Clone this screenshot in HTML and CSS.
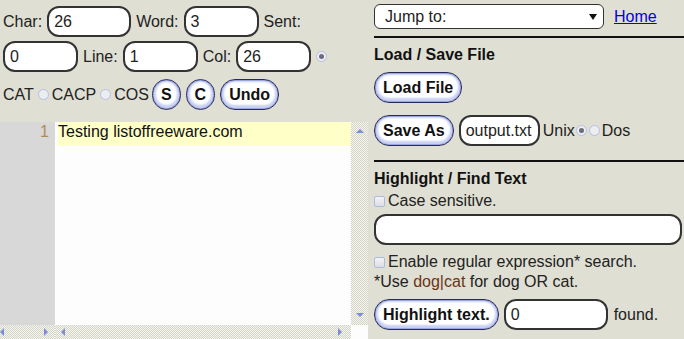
FILE: index.html
```html
<!DOCTYPE html>
<html lang="en">
<head>
    <meta charset="UTF-8">
    <meta name="viewport" content="width=device-width, initial-scale=1.0">
    <title>Text Editor</title>
    <link rel="stylesheet" href="styles.css">
</head>
<body>
    <div class="page">
        <div class="left">
            <div class="stats">
                <div class="row">
                    <span>Char:</span>
                    <input class="field w84" type="text" value="26">
                    <span>Word:</span>
                    <input class="field" type="text" value="3">
                    <span>Sent:</span>
                </div>
                <div class="row">
                    <input class="field" type="text" value="0">
                    <span>Line:</span>
                    <input class="field" type="text" value="1">
                    <span>Col:</span>
                    <input class="field" type="text" value="26">
                    <span class="radio on"></span>
                </div>
                <div class="row modes">
                    <span>CAT</span>
                    <span class="radio gap"></span>
                    <span>CACP</span>
                    <span class="radio gap"></span>
                    <span>COS</span>
                    <button class="btn first">S</button>
                    <button class="btn">C</button>
                    <button class="btn">Undo</button>
                </div>
            </div>
            <div class="editor">
                <div class="editor-main">
                    <div class="gutter"><div class="ln">1</div></div>
                    <div class="code"><div class="line active">Testing listoffreeware.com</div></div>
                    <div class="vscroll checker">
                        <span class="arrow up"></span>
                        <span class="arrow down"></span>
                    </div>
                </div>
                <div class="hscroll">
                    <div class="hs-gutter checker">
                        <span class="arrow back"></span>
                        <span class="arrow fwd"></span>
                    </div>
                    <div class="hs-code checker">
                        <span class="arrow back"></span>
                        <span class="arrow fwd"></span>
                    </div>
                    <div class="corner"></div>
                </div>
            </div>
        </div>

        <div class="side">
            <div class="jump-row">
                <div class="jump">
                    <select><option>Jump to:</option></select>
                </div>
                <a href="#">Home</a>
            </div>
            <div class="rule"></div>

            <div class="heading">Load / Save File</div>
            <div class="load-row"><button class="btn">Load File</button></div>
            <div class="save-row">
                <button class="btn">Save As</button>
                <input class="field w81" type="text" value="output.txt">
                <span class="unix">Unix</span>
                <span class="radio on"></span>
                <span class="radio dos"></span>
                <span>Dos</span>
            </div>
            <div class="rule second"></div>

            <div class="heading">Highlight / Find Text</div>
            <div class="check-line"><span class="check"></span>Case sensitive.</div>
            <input class="field search" type="text" value="">
            <div class="check-line regex"><span class="check"></span>Enable regular expression* search.</div>
            <div class="hint">*Use <span class="code-word">dog|cat</span> for dog OR cat.</div>
            <div class="find-row">
                <button class="btn">Highlight text.</button>
                <input class="field w104" type="text" value="0">
                <span>found.</span>
            </div>
        </div>
    </div>
</body>
</html>
```

FILE: styles.css
```css
body {
    margin: 0;
    background: #dfdfd3;
    font-family: "Liberation Sans", Arial, sans-serif;
    font-size: 16px;
    color: #222;
}
.page {
    display: flex;
    height: 339px;
    overflow: hidden;
}

/* left side */
.left {
    width: 368px;
    flex: none;
    display: flex;
    flex-direction: column;
}
.stats {
    padding: 6px 0 0 3px;
}
.row {
    display: flex;
    align-items: center;
    gap: 5px;
    height: 31px;
}
.row + .row {
    margin-top: 4px;
}
.row.modes {
    margin-top: 7px;
    gap: 0;
}
.field {
    box-sizing: border-box;
    width: 75px;
    height: 31px;
    border: 2px solid #333;
    border-radius: 12px;
    padding: 0 5px;
    background: #fff;
    font: 16px "Liberation Sans", Arial, sans-serif;
    color: #222;
}
.field.w84 { width: 84px; }
.field.w81 { width: 81px; }
.field.w104 { width: 104px; }
.radio {
    box-sizing: border-box;
    display: inline-flex;
    align-items: center;
    justify-content: center;
    width: 11px;
    height: 11px;
    border-radius: 50%;
    border: 1px solid #b4c0e4;
    background: #ecedf0;
    flex: none;
}
.radio.on::after {
    content: "";
    width: 5px;
    height: 5px;
    border-radius: 50%;
    background: #6c6c7c;
}
.radio.gap {
    margin: 0 3px 0 4px;
}
.btn {
    box-sizing: border-box;
    height: 31px;
    padding: 0 8px;
    border: 1px solid #2a2a55;
    border-radius: 15px;
    background: #fff;
    box-shadow: inset 0 0 0 1px #98a6e2, inset 0 -1px 2px 3px #c9d1f3;
    font: bold 16px "Liberation Sans", Arial, sans-serif;
    color: #111;
    cursor: pointer;
}
.modes .btn {
    margin-left: 5px;
}
.modes .btn.first {
    margin-left: 3px;
}

/* editor */
.editor {
    margin-top: 12px;
    flex: 1;
    display: flex;
    flex-direction: column;
}
.editor-main {
    flex: 1;
    display: flex;
}
.gutter {
    width: 55px;
    background: #d8d8d8;
}
.ln {
    height: 24px;
    line-height: 20px;
    text-align: right;
    padding-right: 6px;
    color: #b08a55;
}
.code {
    flex: 1;
    background: #fdfdfd;
    padding-left: 3px;
}
.line {
    height: 24px;
    line-height: 20px;
    color: #111;
}
.line.active {
    background: #ffffc8;
}
.checker {
    background: repeating-conic-gradient(#d4d4c6 0 25%, #f6f6f0 0 50%) 0 0 / 2px 2px;
}
.vscroll {
    width: 17px;
    flex: none;
    display: flex;
    flex-direction: column;
    align-items: center;
    justify-content: space-between;
    padding: 7px 0 8px;
    box-sizing: border-box;
}
.hscroll {
    height: 14px;
    display: flex;
}
.hs-gutter, .hs-code {
    display: flex;
    align-items: center;
    justify-content: space-between;
    box-sizing: border-box;
    flex: none;
}
.hs-gutter {
    width: 55px;
    padding-right: 7px;
}
.hs-code {
    width: 296px;
    padding: 0 9px 0 6px;
}
.corner {
    flex: 1;
    background: #fdfdfd;
}
.arrow {
    display: block;
    width: 0;
    height: 0;
    flex: none;
}
.arrow.up {
    border-left: 4px solid transparent;
    border-right: 4px solid transparent;
    border-bottom: 4px solid #7c8cd6;
}
.arrow.down {
    border-left: 4px solid transparent;
    border-right: 4px solid transparent;
    border-top: 4px solid #7c8cd6;
}
.arrow.back {
    border-top: 4px solid transparent;
    border-bottom: 4px solid transparent;
    border-right: 4px solid #7c8cd6;
}
.arrow.fwd {
    border-top: 4px solid transparent;
    border-bottom: 4px solid transparent;
    border-left: 4px solid #7c8cd6;
}

/* right side */
.side {
    flex: 1;
    padding: 4px 0 0 6px;
}
.jump-row {
    display: flex;
    align-items: center;
    gap: 10px;
    height: 25px;
}
.jump {
    position: relative;
    width: 230px;
    height: 25px;
}
.jump select {
    appearance: none;
    width: 100%;
    height: 25px;
    border: 1px solid #333;
    border-radius: 6px;
    background: #fff;
    padding: 0 0 0 10px;
    font: 16px "Liberation Sans", Arial, sans-serif;
    color: #222;
}
.jump::after {
    content: "";
    position: absolute;
    right: 7px;
    top: 10px;
    border-left: 4px solid transparent;
    border-right: 4px solid transparent;
    border-top: 6px solid #111;
    pointer-events: none;
}
.jump-row a {
    color: #0000ee;
}
.rule {
    height: 2px;
    background: #111;
    margin-top: 7px;
}
.rule.second {
    margin-top: 14px;
}
.heading {
    font-weight: bold;
    line-height: 18px;
    margin-top: 8px;
    color: #111;
}
.load-row {
    margin-top: 8px;
}
.save-row {
    display: flex;
    align-items: center;
    margin-top: 12px;
}
.save-row .field {
    margin-left: 5px;
}
.unix {
    margin-left: 3px;
    margin-right: 1px;
}
.radio.dos {
    margin: 0 2px;
}
.check-line {
    display: flex;
    align-items: center;
    line-height: 18px;
    margin-top: 4px;
}
.check-line.regex {
    margin-top: 8px;
}
.check {
    box-sizing: border-box;
    width: 11px;
    height: 11px;
    margin-right: 3px;
    border: 1px solid #aebbe0;
    border-radius: 2px;
    background: linear-gradient(#f4f4f4, #dcdce4);
}
.field.search {
    display: block;
    width: 308px;
    margin-top: 4px;
}
.hint {
    line-height: 18px;
    margin-top: 2px;
}
.code-word {
    color: #6b3416;
}
.find-row {
    display: flex;
    align-items: center;
    gap: 5px;
    margin-top: 8px;
}
.find-row span {
    margin-left: 1px;
}
```
